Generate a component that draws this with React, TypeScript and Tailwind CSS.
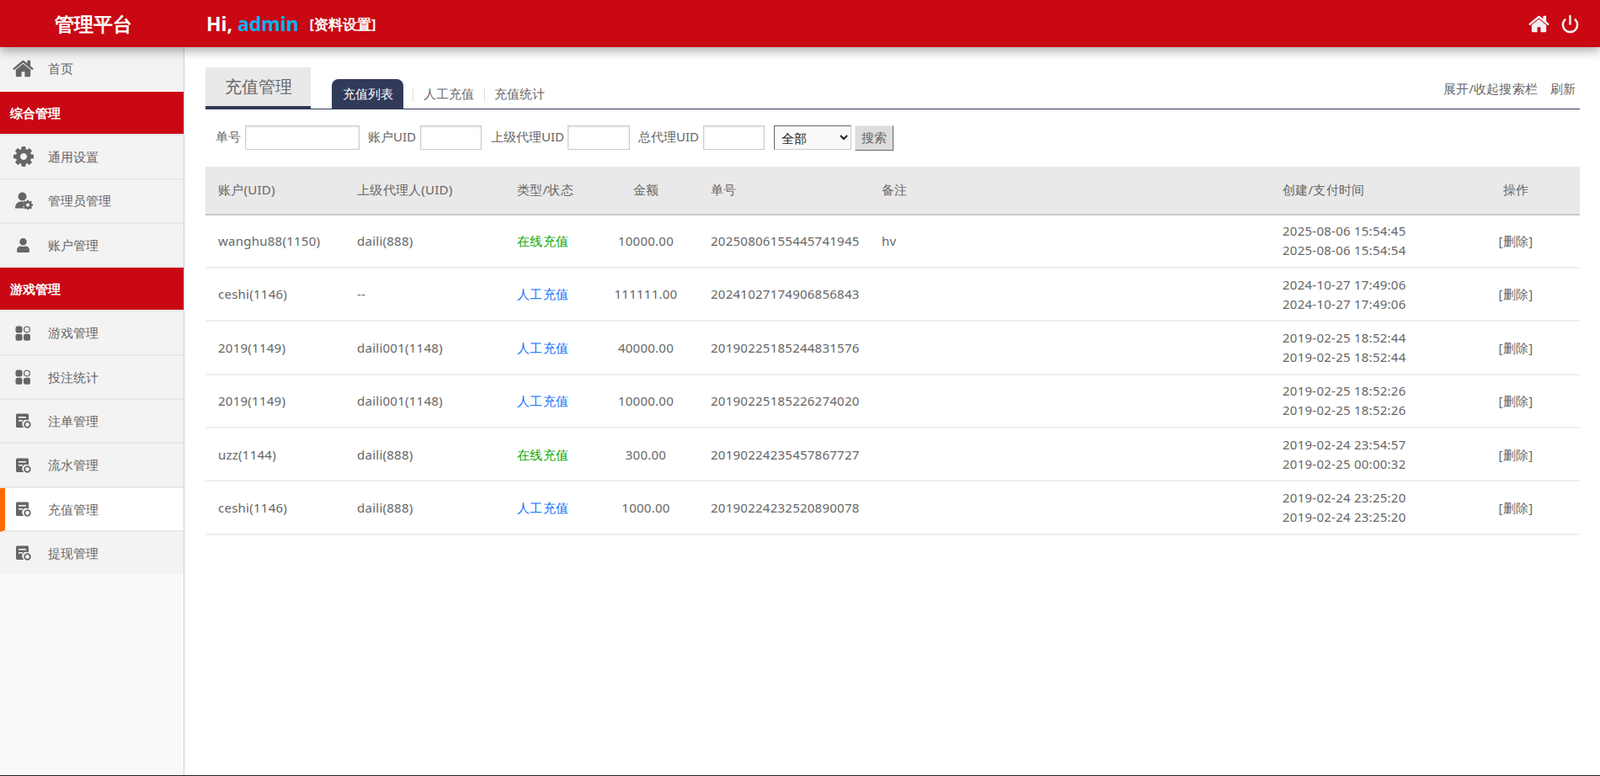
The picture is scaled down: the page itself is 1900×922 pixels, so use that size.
import type { FC, ReactNode } from "react"
import { Power } from "lucide-react"
import { FaUser } from "react-icons/fa"

const font = "font-['Noto_Sans','Noto_Sans_CJK_SC',sans-serif]"

const cogPath =
  "M1152 896q0-106-75-181t-181-75-181 75-75 181 75 181 181 75 181-75 75-181zm512-109v222q0 12-8 23t-20 13l-185 28q-19 54-39 91 35 50 107 138 10 12 10 25t-9 23q-27 37-99 108t-94 71q-12 0-26-9l-138-108q-44 23-91 38-16 136-29 186-7 28-36 28h-222q-14 0-24.500-8.500t-11.500-21.500l-28-184q-49-16-90-37l-141 107q-10 9-25 9-14 0-25-11-126-114-165-168-7-10-7-23 0-12 8-23 15-21 51-66.500t54-70.500q-27-50-41-99l-183-27q-13-2-21-12.500t-8-23.500v-222q0-12 8-23t19-13l186-28q14-46 39-92-40-57-107-138-10-12-10-24 0-10 9-23 26-36 98.500-107.500t94.500-71.500q13 0 26 10l138 107q44-23 91-38 16-136 29-186 7-28 36-28h222q14 0 24.500 8.500t11.500 21.500l28 184q49 16 90 37l142-107q9-9 24-9 13 0 25 10 129 119 165 170 7 8 7 22 0 12-8 23-15 21-51 66.500t-54 70.500q26 50 41 98l183 28q13 2 21 12.500t8 23.500z"

const HomeIcon: FC<{ size: number; color: string }> = ({ size, color }) => (
  <svg className="shrink-0" width={size} height={size} viewBox="0 0 1792 1792" fill={color}>
    <path d="M1472 992v480q0 26-19 45t-45 19h-384v-384h-256v384h-384q-26 0-45-19t-19-45v-480q0-1 .5-3t.5-3l575-474 575 474q1 2 1 6zm223-69l-62 74q-8 9-21 11h-3q-13 0-21-7l-692-577-692 577q-12 8-24 7-13-2-21-11l-62-74q-8-10-7-23.500t11-21.500l719-599q32-26 76-26t76 26l244 204v-195q0-14 9-23t23-9h192q14 0 23 9t9 23v408l219 182q10 8 11 21.500t-7 23.500z" />
  </svg>
)

const CogIcon = () => (
  <svg className="shrink-0" width="28" height="28" viewBox="0 0 1792 1792" fill="#666">
    <path d={cogPath} />
  </svg>
)

// 管理员图标：人像加右下角小齿轮
const AdminIcon = () => (
  <svg className="shrink-0" width="22" height="21" viewBox="0 0 22 21" fill="#666">
    <circle cx="9.500" cy="5.500" r="5" />
    <path d="M1 19.500C1 14.500 4 11.500 7.500 11.500h4c.8 0 1.500.2 2.100.500a5.500 5.500 0 0 0-2.600 7.500H1z" />
    <svg x="10" y="9.500" width="12" height="12" viewBox="128 128 1536 1536">
      <path d={cogPath} />
    </svg>
  </svg>
)

// 四宫格图标，右上角是空心圆
const GridIcon = () => (
  <svg width="19" height="18" viewBox="0 0 19 18" fill="#666">
    <rect x="0.5" y="0.5" width="8" height="8" rx="2.5" />
    <circle cx="14" cy="4.5" r="3.4" fill="none" stroke="#777" strokeWidth="1.4" />
    <rect x="0.5" y="9.8" width="8" height="8" rx="2.5" />
    <rect x="10" y="9.8" width="8" height="8" rx="2.5" />
  </svg>
)

// 单据图标，右下角带小齿轮
const DocIcon = () => (
  <svg width="18" height="18" viewBox="0 0 18 18">
    <path d="M1.5 0.5h12a1.5 1.5 0 0 1 1.5 1.5v6.5a5 5 0 0 0-5.5 8.5H1.5A1.5 1.5 0 0 1 0 15.500V2A1.500 1.500 0 0 1 1.500 0.500z" fill="#666" />
    <rect x="3" y="4" width="9" height="1.6" fill="#f3f3f3" />
    <rect x="3" y="8" width="5" height="1.6" fill="#f3f3f3" />
    <circle cx="13.500" cy="13.500" r="3.300" fill="none" stroke="#666" strokeWidth="1.800" />
  </svg>
)

interface MenuItemProps {
  icon: ReactNode
  label: string
  active?: boolean
  last?: boolean
}

const MenuItem: FC<MenuItemProps> = ({ icon, label, active, last }) => (
  <div
    className={`flex items-center ${last ? "h-[50.3px]" : "h-[52.3px] border-b-2 border-[#e8e8e8]"} ${
      active ? "border-l-[6px] border-l-[#ff6a00] bg-white pl-[10px]" : "bg-[#f3f3f3] pl-[16px]"
    }`}
  >
    <div className="flex w-[23px] justify-center">{icon}</div>
    <span className="ml-[18px] text-[15px] text-[#666]">{label}</span>
  </div>
)

const SectionTitle: FC<{ label: string }> = ({ label }) => (
  <div className="flex h-[52.3px] items-center border-b-2 border-[#e8e8e8] bg-[#c90813] pl-[12px] text-[15px] font-bold text-white">
    {label}
  </div>
)

const Sidebar = () => (
  <aside className="w-[219px] shrink-0 border-r border-[#c8d2e0] bg-[#f9f9f9]">
    <div className="flex h-[53px] items-center border-b-2 border-[#fafafa] bg-[#f3f3f3] pl-[16px]">
      <div className="flex w-[23px] justify-center">
        <HomeIcon size={27} color="#666" />
      </div>
      <span className="ml-[18px] text-[15px] text-[#666]">首页</span>
    </div>
    <SectionTitle label="综合管理" />
    <MenuItem icon={<CogIcon />} label="通用设置" />
    <MenuItem icon={<AdminIcon />} label="管理员管理" />
    <MenuItem icon={<FaUser size={17} color="#666" />} label="账户管理" />
    <SectionTitle label="游戏管理" />
    <MenuItem icon={<GridIcon />} label="游戏管理" />
    <MenuItem icon={<GridIcon />} label="投注统计" />
    <MenuItem icon={<DocIcon />} label="注单管理" />
    <MenuItem icon={<DocIcon />} label="流水管理" />
    <MenuItem icon={<DocIcon />} label="充值管理" active />
    <MenuItem icon={<DocIcon />} label="提现管理" last />
  </aside>
)

const TextInput: FC<{ className: string }> = ({ className }) => (
  <input
    type="text"
    className={`h-[29px] border border-[#ccc] bg-white shadow-[inset_0_1px_3px_rgba(0,0,0,0.12)] ${className}`}
  />
)

const Filters = () => (
  <div className="flex h-[68px] items-center pl-[12px] text-[15px] text-[#666]">
    <span className="mb-[3px]">单号</span>
    <TextInput className="ml-[5px] w-[136px]" />
    <span className="mb-[3px] ml-[10px]">账户UID</span>
    <TextInput className="ml-[5px] w-[73px]" />
    <span className="mb-[3px] ml-[11px]">上级代理UID</span>
    <TextInput className="ml-[4px] w-[74px]" />
    <span className="mb-[3px] ml-[10px]">总代理UID</span>
    <TextInput className="ml-[5px] w-[73px]" />
    <select className="ml-[11px] h-[29px] w-[92px] border border-[#ccc] border-t-[#666] border-l-[#666] bg-[#f9f9f9] pl-[4px] text-[15px] text-[#222]">
      <option>全部</option>
    </select>
    <button className="ml-[4px] h-[30px] w-[46px] border border-[#eee] border-r-[#666] border-b-[#666] bg-[#ddd] text-[15px] text-[#666]">
      搜索
    </button>
  </div>
)

interface Row {
  account: string
  agent: string
  type: string
  amount: string
  orderNo: string
  note: string
  created: string
  paid: string
}

const rows: Row[] = [
  { account: "wanghu88(1150)", agent: "daili(888)", type: "在线充值", amount: "10000.00", orderNo: "20250806155445741945", note: "hv", created: "2025-08-06 15:54:45", paid: "2025-08-06 15:54:54" },
  { account: "ceshi(1146)", agent: "--", type: "人工充值", amount: "111111.00", orderNo: "20241027174906856843", note: "", created: "2024-10-27 17:49:06", paid: "2024-10-27 17:49:06" },
  { account: "2019(1149)", agent: "daili001(1148)", type: "人工充值", amount: "40000.00", orderNo: "20190225185244831576", note: "", created: "2019-02-25 18:52:44", paid: "2019-02-25 18:52:44" },
  { account: "2019(1149)", agent: "daili001(1148)", type: "人工充值", amount: "10000.00", orderNo: "20190225185226274020", note: "", created: "2019-02-25 18:52:26", paid: "2019-02-25 18:52:26" },
  { account: "uzz(1144)", agent: "daili(888)", type: "在线充值", amount: "300.00", orderNo: "20190224235457867727", note: "", created: "2019-02-24 23:54:57", paid: "2019-02-25 00:00:32" },
  { account: "ceshi(1146)", agent: "daili(888)", type: "人工充值", amount: "1000.00", orderNo: "20190224232520890078", note: "", created: "2019-02-24 23:25:20", paid: "2019-02-24 23:25:20" },
]

const Table = () => (
  <table className="w-full table-fixed border-collapse text-[15px] tracking-[0.25px] text-[#666]">
    <colgroup>
      <col className="w-[165px]" />
      <col className="w-[190px]" />
      <col className="w-[106px]" />
      <col className="w-[124px]" />
      <col className="w-[203px]" />
      <col className="w-[476px]" />
      <col className="w-[216px]" />
      <col className="w-[152px]" />
    </colgroup>
    <thead>
      <tr className="h-[57px] border-b-2 border-[#c9c9c9] bg-[#e9e9e9]">
        <th className="pl-[15px] text-left font-normal">账户(UID)</th>
        <th className="pl-[15px] text-left font-normal">上级代理人(UID)</th>
        <th className="pl-[15px] text-left font-normal">类型/状态</th>
        <th className="text-center font-normal">金额</th>
        <th className="pl-[15px] text-left font-normal">单号</th>
        <th className="pl-[15px] text-left font-normal">备注</th>
        <th className="pl-[15px] text-left font-normal">创建/支付时间</th>
        <th className="text-center font-normal">操作</th>
      </tr>
    </thead>
    <tbody>
      {rows.map((row) => (
        <tr key={row.orderNo} className="h-[63.4px] border-b-2 border-[#eee]">
          <td className="pl-[15px]">{row.account}</td>
          <td className="pl-[15px]">{row.agent}</td>
          <td className={`pl-[15px] ${row.type === "在线充值" ? "text-[#00a600]" : "text-[#0d6efd]"}`}>{row.type}</td>
          <td className="text-center">{row.amount}</td>
          <td className="pl-[15px] whitespace-nowrap">{row.orderNo}</td>
          <td className="pl-[15px]">{row.note}</td>
          <td className="pl-[15px] leading-[23px]">
            <div>{row.created}</div>
            <div>{row.paid}</div>
          </td>
          <td className="text-center">[删除]</td>
        </tr>
      ))}
    </tbody>
  </table>
)

const App = () => (
  <div className={`flex h-[922px] flex-col overflow-hidden bg-white ${font}`}>
    <header className="relative z-10 flex h-[56px] shrink-0 items-center bg-[#c90813] text-white shadow-[0_4px_12px_rgba(0,0,0,0.35)]">
      <div className="w-[245px] pl-[65px] text-[23px] font-bold">管理平台</div>
      <div className="text-[23px] font-bold">
        Hi, <span className="text-[#00b4f5]">admin</span>
      </div>
      <div className="ml-[13px] mt-[3px] text-[16.5px] font-bold">[资料设置]</div>
      <div className="ml-auto flex items-center gap-[12px] pr-[24px]">
        <HomeIcon size={27} color="#f2f2f2" />
        <Power size={23} strokeWidth={2.6} color="#f2f2f2" />
      </div>
    </header>

    <div className="flex flex-1">
      <Sidebar />
      <main className="flex-1 pl-[25px] pr-[24px] pt-[23px]">
        <div className="flex h-[50.5px] items-end border-b-[1.5px] border-[#323a5a] text-[15px] text-[#666]">
          <div className="flex h-[49px] w-[125px] items-center justify-center border-b-[3px] border-[#323a5a] bg-[#e9e9e9] text-[20px]">
            充值管理
          </div>
          <div className="ml-[25px] flex h-[35px] w-[85px] items-center justify-center rounded-t-[8px] bg-[#323a5a] text-white">
            充值列表
          </div>
          <div className="ml-[11px] mb-[8px] h-[16px] w-[1px] bg-[#e8dcd8]" />
          <div className="ml-[12px] flex h-[35px] items-center">人工充值</div>
          <div className="ml-[12px] mb-[8px] h-[16px] w-[1px] bg-[#e8dcd8]" />
          <div className="ml-[11px] flex h-[35px] items-center">充值统计</div>
          <div className="ml-auto flex h-[46px] items-center gap-[15px] pr-[5px]">
            <span className="tracking-[0.2px]">展开/收起搜索栏</span>
            <span>刷新</span>
          </div>
        </div>
        <Filters />
        <Table />
      </main>
    </div>
    <div className="h-[1px] shrink-0 bg-[#222]" />
  </div>
)

export default App
